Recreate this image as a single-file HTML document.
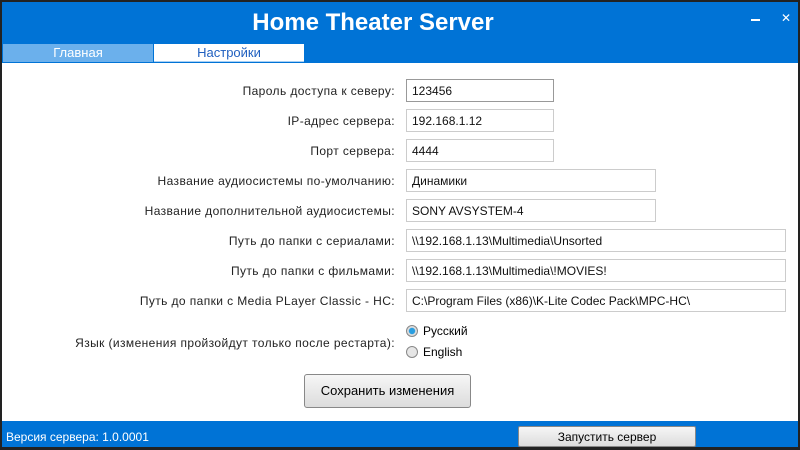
<!DOCTYPE html><html><head><meta charset="utf-8"><style>
body{margin:0;width:800px;height:450px;background:#222;position:relative;overflow:hidden;font-family:"Liberation Sans","DejaVu Sans",sans-serif}
.win{position:absolute;left:2px;top:2px;width:796px;height:445px;background:#fff}
.hdr{position:absolute;left:0;top:0;width:796px;height:61px;background:#0073d6}
.title{position:absolute;left:0;width:742px;top:7px;text-align:center;color:#fff;font-weight:bold;font-size:24px}
.tab{position:absolute;top:42px;height:18px;width:150px;text-align:center;font-size:13px;line-height:18px}
.lbl{position:absolute;right:403px;font-size:12px;letter-spacing:0.4px;color:#222}
.in{position:absolute;left:404px;height:23px;border:1px solid #ccc;box-sizing:border-box;font-size:12px;line-height:22px;padding-left:5px;color:#111}
.rad{position:absolute;left:404px;font-size:12px}
.rad i{display:inline-block;width:10px;height:10px;border-radius:50%;border:1px solid #888;vertical-align:-2px;margin-right:5px;background:#e6e6e6}
.btn{position:absolute;border:1px solid #888;border-radius:3px;background:linear-gradient(#f6f6f6,#dcdcdc);text-align:center;font-size:13px;box-sizing:border-box}
</style></head><body><div class="win">
<div class="hdr"><div class="title">Home Theater Server</div>
<div style="position:absolute;left:749px;top:17px;width:9px;height:2px;background:#fff"></div>
<div style="position:absolute;left:779px;top:9px;color:#fff;font-weight:bold;font-size:12px">✕</div>
<div class="tab" style="left:1px;background:#6bb0ec;color:#fff">Главная</div>
<div class="tab" style="left:152px;background:#fff;color:#2060c0;border-bottom:1px solid #a8d0f4;height:17px">Настройки</div></div>
<div class="lbl" style="top:82px">Пароль доступа к северу:</div><div class="in" style="top:77px;width:148px;border-color:#999">123456</div>
<div class="lbl" style="top:112px">IP-адрес сервера:</div><div class="in" style="top:107px;width:148px">192.168.1.12</div>
<div class="lbl" style="top:142px">Порт сервера:</div><div class="in" style="top:137px;width:148px">4444</div>
<div class="lbl" style="top:172px">Название аудиосистемы по-умолчанию:</div><div class="in" style="top:167px;width:250px">Динамики</div>
<div class="lbl" style="top:202px">Название дополнительной аудиосистемы:</div><div class="in" style="top:197px;width:250px">SONY AVSYSTEM-4</div>
<div class="lbl" style="top:232px">Путь до папки с сериалами:</div><div class="in" style="top:227px;width:380px">\\192.168.1.13\Multimedia\Unsorted</div>
<div class="lbl" style="top:262px">Путь до папки с фильмами:</div><div class="in" style="top:257px;width:380px">\\192.168.1.13\Multimedia\!MOVIES!</div>
<div class="lbl" style="top:292px">Путь до папки с Media PLayer Classic - HC:</div><div class="in" style="top:287px;width:380px">C:\Program Files (x86)\K-Lite Codec Pack\MPC-HC\</div>
<div class="lbl" style="top:334px">Язык (изменения пройзойдут только после рестарта):</div>
<div class="rad" style="top:322px"><i style="background:radial-gradient(#2a9ee0 40%,#ddd 50%)"></i>Русский</div>
<div class="rad" style="top:343px"><i></i>English</div>
<div class="btn" style="left:302px;top:372px;width:167px;height:34px;line-height:32px">Сохранить изменения</div>
<div style="position:absolute;left:0;top:419px;width:796px;height:26px;background:#0073d6"></div>
<div style="position:absolute;left:4px;top:428px;color:#fff;font-size:12px">Версия сервера: 1.0.0001</div>
<div class="btn" style="left:516px;top:424px;width:178px;height:21px;line-height:20px;font-size:12px;border-radius:2px">Запустить сервер</div>
</div></body></html>
